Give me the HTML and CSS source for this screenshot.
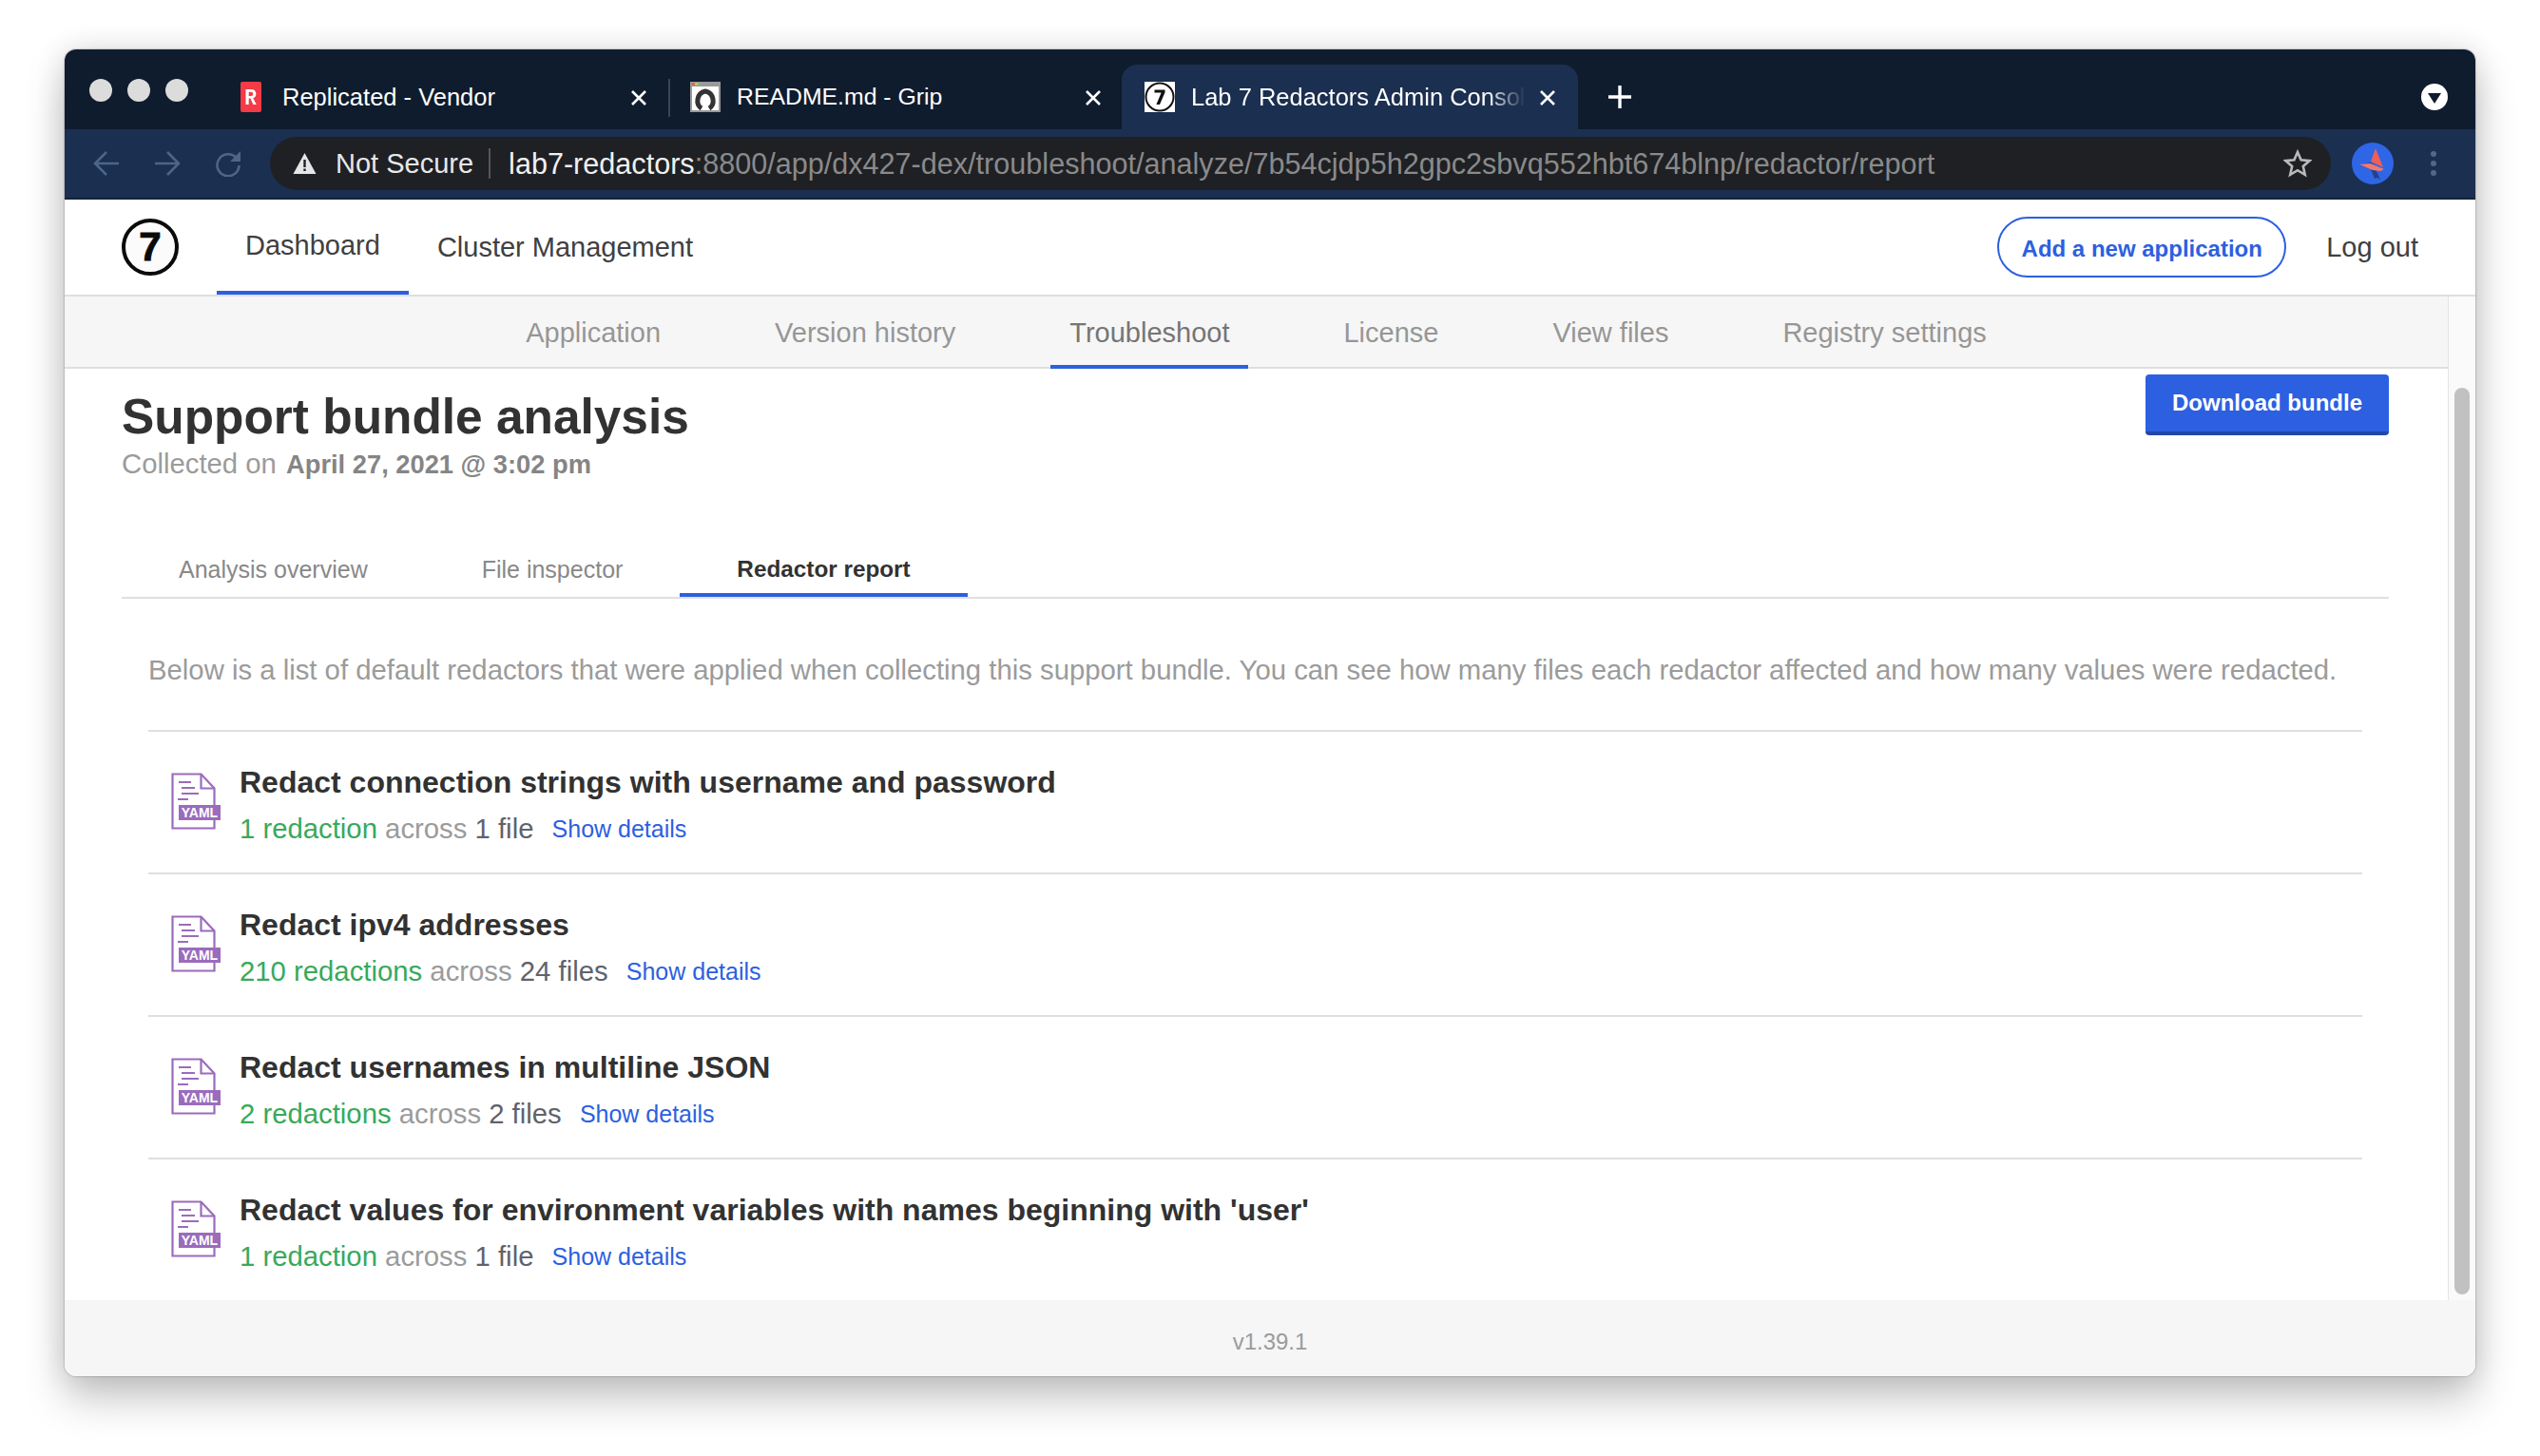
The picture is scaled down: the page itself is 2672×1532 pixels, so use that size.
FILE: index.html
```html
<!DOCTYPE html>
<html>
<head>
  <meta charset="utf-8">
  <title>Lab 7 Redactors Admin Console</title>
  <link rel="stylesheet" href="styles.css">
</head>
<body>
<div class="window">

  <div class="tabstrip">
    <div class="lights"><i></i><i></i><i></i></div>
    <div class="tab">
      <svg class="favicon" viewBox="0 0 22 32"><rect width="22" height="32" rx="2" fill="#f43b47"/><path d="M5.500 24V8h6a4.800 4.800 0 0 1 1.700 9.300L16.800 24h-3.400l-3-6.400H8.700V24zM8.700 10.800v4.200h2.500a2.100 2.100 0 0 0 0-4.200z" fill="#fff"/></svg>
      <span class="tab-title">Replicated - Vendor</span>
      <svg class="tab-x" viewBox="0 0 18 16"><path d="M2 1l14 14M16 1 2 15" stroke="#fff" stroke-width="2.600" fill="none"/></svg>
    </div>
    <div class="tab tab-second">
      <svg class="favicon favicon-wide" viewBox="0 0 32 32"><rect width="32" height="32" fill="#9a9a9a"/><rect x="2" y="5" width="28" height="25" fill="#fff"/><rect x="2" y="1.500" width="3" height="2" fill="#e2574c"/><rect x="5" y="1.500" width="3" height="2" fill="#e6c84a"/><rect x="8" y="1.500" width="3" height="2" fill="#7fbf6a"/><path d="M12 28C5.500 24 6.500 12 16 10c9.500 2 10.500 14 4 18" fill="none" stroke="#333" stroke-width="5"/></svg>
      <span class="tab-title">README.md - Grip</span>
      <svg class="tab-x" viewBox="0 0 18 16"><path d="M2 1l14 14M16 1 2 15" stroke="#fff" stroke-width="2.600" fill="none"/></svg>
    </div>
    <div class="tab tab-active">
      <svg class="favicon favicon-wide" viewBox="0 0 32 32"><rect width="32" height="32" fill="#fff"/><circle cx="16" cy="16" r="14.500" fill="#fff" stroke="#111" stroke-width="2"/><path d="M10.500 8.500h11v2.800L16 24h-3.600l5.200-12.400h-7.100z" fill="#111"/></svg>
      <span class="tab-title tab-title-fade">Lab 7 Redactors Admin Console</span>
      <svg class="tab-x" viewBox="0 0 18 16"><path d="M2 1l14 14M16 1 2 15" stroke="#fff" stroke-width="2.600" fill="none"/></svg>
    </div>
    <svg class="new-tab" viewBox="0 0 24 24"><path d="M12 0v24M0 12h24" stroke="#fff" stroke-width="3.400" fill="none"/></svg>
    <div class="tab-search"><span></span></div>
  </div>

  <div class="toolbar">
    <svg class="nav-icon" viewBox="0 0 28 28"><path d="M27 14H3M14 2 2 14l12 12" fill="none" stroke="#4d6589" stroke-width="2.600"/></svg>
    <svg class="nav-icon" viewBox="0 0 28 28"><path d="M1 14h24M14 2l12 12-12 12" fill="none" stroke="#4d6589" stroke-width="2.600"/></svg>
    <svg class="nav-icon" viewBox="0 0 28 28"><path d="M22.500 8A11.500 11.500 0 1 0 25.500 16" fill="none" stroke="#4d6589" stroke-width="2.600"/><path d="M27 1v11H16z" fill="#4d6589"/></svg>
    <div class="omnibox">
      <svg class="warn" viewBox="0 0 24 22"><path d="M12 0 24 22H0z" fill="#e6e6e6"/><path d="M10.800 7h2.400v8h-2.400zM10.800 16.500h2.400v2.500h-2.400z" fill="#1e2024"/></svg>
      <span class="not-secure">Not Secure</span>
      <span class="omni-url"><b>lab7-redactors</b>:8800/app/dx427-dex/troubleshoot/analyze/7b54cjdp5h2gpc2sbvq552hbt674blnp/redactor/report</span>
      <svg class="star" viewBox="0 0 30 30"><path d="M15 3l3.600 8.300 9 .8-6.800 5.900 2 8.800-7.800-4.600-7.800 4.600 2-8.800-6.800-5.900 9-.8z" fill="none" stroke="#b9b9b9" stroke-width="2.600"/></svg>
    </div>
    <svg class="avatar" viewBox="0 0 44 44"><circle cx="22" cy="22" r="22" fill="#2f66e6"/><path d="M19 26l6 2 5 11-3-2-3 1z" fill="#24408c"/><path d="M8 24l11 3 6 2-5-9z" fill="#1f4aa8" opacity=".7"/><path d="M25 6l8 20-13-6z" fill="#ee5f55"/><path d="M8 23l11-1 15 6-4 2-8-1z" fill="#f7776b"/></svg>
    <div class="kebab"><i></i><i></i><i></i></div>
  </div>

  <div class="appnav">
    <div class="logo"><span>7</span></div>
    <a class="appnav-link appnav-active">Dashboard</a>
    <a class="appnav-link">Cluster Management</a>
    <div class="appnav-right">
      <a class="pill">Add a new application</a>
      <a class="logout">Log out</a>
    </div>
  </div>

  <div class="middle">
    <div class="content">
      <div class="subnav">
        <a class="subnav-item">Application</a>
        <a class="subnav-item">Version history</a>
        <a class="subnav-item subnav-active">Troubleshoot</a>
        <a class="subnav-item">License</a>
        <a class="subnav-item">View files</a>
        <a class="subnav-item">Registry settings</a>
      </div>
      <div class="main">
        <div class="head">
          <div>
            <h1>Support bundle analysis</h1>
            <p class="collected">Collected on <b>April 27, 2021 @ 3:02 pm</b></p>
          </div>
          <a class="download">Download bundle</a>
        </div>
        <div class="tabs">
          <a class="tabs-item">Analysis overview</a>
          <a class="tabs-item">File inspector</a>
          <a class="tabs-item tabs-active">Redactor report</a>
        </div>
        <div class="report">
          <p class="intro">Below is a list of default redactors that were applied when collecting this support bundle. You can see how many files each redactor affected and how many values were redacted.</p>

          <div class="row">
            <svg class="yaml" viewBox="0 0 52 60"><path d="M1.500 1.500h30l14 15v42h-44z" fill="#fff" stroke="#9b6bbd" stroke-width="2.200"/><path d="M31.500 1.500v15h14" fill="none" stroke="#9b6bbd" stroke-width="2.200"/><path d="M8 10h13M11 16h14M11 22h18M7 28h11" stroke="#9b6bbd" stroke-width="2.200"/><rect x="8" y="34" width="44" height="16" fill="#9b6bbd"/><text x="30" y="46.800" class="yaml-text">YAML</text></svg>
            <div>
              <div class="row-title">Redact connection strings with username and password</div>
              <div class="row-sub"><span class="green">1 redaction</span> across <span class="count">1 file</span> <a class="details">Show details</a></div>
            </div>
          </div>

          <div class="row">
            <svg class="yaml" viewBox="0 0 52 60"><path d="M1.500 1.500h30l14 15v42h-44z" fill="#fff" stroke="#9b6bbd" stroke-width="2.200"/><path d="M31.500 1.500v15h14" fill="none" stroke="#9b6bbd" stroke-width="2.200"/><path d="M8 10h13M11 16h14M11 22h18M7 28h11" stroke="#9b6bbd" stroke-width="2.200"/><rect x="8" y="34" width="44" height="16" fill="#9b6bbd"/><text x="30" y="46.800" class="yaml-text">YAML</text></svg>
            <div>
              <div class="row-title">Redact ipv4 addresses</div>
              <div class="row-sub"><span class="green">210 redactions</span> across <span class="count">24 files</span> <a class="details">Show details</a></div>
            </div>
          </div>

          <div class="row">
            <svg class="yaml" viewBox="0 0 52 60"><path d="M1.500 1.500h30l14 15v42h-44z" fill="#fff" stroke="#9b6bbd" stroke-width="2.200"/><path d="M31.500 1.500v15h14" fill="none" stroke="#9b6bbd" stroke-width="2.200"/><path d="M8 10h13M11 16h14M11 22h18M7 28h11" stroke="#9b6bbd" stroke-width="2.200"/><rect x="8" y="34" width="44" height="16" fill="#9b6bbd"/><text x="30" y="46.800" class="yaml-text">YAML</text></svg>
            <div>
              <div class="row-title">Redact usernames in multiline JSON</div>
              <div class="row-sub"><span class="green">2 redactions</span> across <span class="count">2 files</span> <a class="details">Show details</a></div>
            </div>
          </div>

          <div class="row">
            <svg class="yaml" viewBox="0 0 52 60"><path d="M1.500 1.500h30l14 15v42h-44z" fill="#fff" stroke="#9b6bbd" stroke-width="2.200"/><path d="M31.500 1.500v15h14" fill="none" stroke="#9b6bbd" stroke-width="2.200"/><path d="M8 10h13M11 16h14M11 22h18M7 28h11" stroke="#9b6bbd" stroke-width="2.200"/><rect x="8" y="34" width="44" height="16" fill="#9b6bbd"/><text x="30" y="46.800" class="yaml-text">YAML</text></svg>
            <div>
              <div class="row-title">Redact values for environment variables with names beginning with 'user'</div>
              <div class="row-sub"><span class="green">1 redaction</span> across <span class="count">1 file</span> <a class="details">Show details</a></div>
            </div>
          </div>
        </div>
      </div>
    </div>
    <div class="scrolltrack"><div class="scrollthumb"></div></div>
  </div>

  <div class="footer">v1.39.1</div>
</div>
</body>
</html>
```
FILE: styles.css
```css
html, body {
  margin: 0;
  background: #fff;
}

body {
  height: 1532px;
  overflow: hidden;
  padding: 52px 68px 0;
  box-sizing: border-box;
  font-family: "Liberation Sans", Arial, sans-serif;
  color: #323232;
}

.window {
  width: 2536px;
  height: 1396px;
  display: flex;
  flex-direction: column;
  background: #fff;
  border-radius: 12px;
  overflow: hidden;
  box-shadow: 0 0 2px rgba(0, 0, 0, .45), 0 24px 44px rgba(0, 0, 0, .22), 0 0 32px rgba(0, 0, 0, .12);
}

/* browser chrome */
.tabstrip {
  height: 84px;
  flex: none;
  display: flex;
  background: #0f1c2e;
  box-sizing: border-box;
  padding-top: 16px;
  color: #fff;
}

.lights {
  display: flex;
  gap: 16px;
  width: 158px;
  padding: 15px 0 0 26px;
  box-sizing: border-box;
  flex: none;
}

.lights i {
  width: 24px;
  height: 24px;
  border-radius: 50%;
  background: #dcdcdc;
}

.tab {
  width: 477px;
  height: 68px;
  flex: none;
  display: flex;
  align-items: flex-start;
  box-sizing: border-box;
  padding: 18px 22px 0 27px;
  font-size: 25.500px;
  line-height: 32px;
}

.tab-second {
  border-left: 2px solid #3a4658;
  height: 40px;
  margin-top: 15px;
  padding: 3px 21px 0 21px;
  font-size: 24.800px;
}

.tab-active {
  background: #1b2f50;
  border-radius: 16px 16px 0 0;
  padding: 18px 23px 0 24px;
  width: 480px;
}

.favicon {
  width: 22px;
  height: 32px;
  flex: none;
  margin-right: 22px;
}

.favicon-wide {
  width: 32px;
  margin-right: 17px;
}

.tab-title {
  flex: 1;
  white-space: nowrap;
  overflow: hidden;
}

.tab-title-fade {
  -webkit-mask-image: linear-gradient(to right, #000 310px, transparent 352px);
  mask-image: linear-gradient(to right, #000 310px, transparent 352px);
}

.tab-x {
  width: 18px;
  height: 16px;
  flex: none;
  margin-top: 9px;
}

.new-tab {
  width: 24px;
  height: 24px;
  flex: none;
  margin: 22px 0 0 32px;
}

.tab-search {
  margin: 20px 29px 0 auto;
  width: 28px;
  height: 28px;
  border-radius: 50%;
  background: #fff;
  display: flex;
  align-items: center;
  justify-content: center;
}

.tab-search span {
  width: 0;
  height: 0;
  border-left: 7px solid transparent;
  border-right: 7px solid transparent;
  border-top: 11px solid #0f1c2e;
  margin-top: 3px;
}

.toolbar {
  height: 74px;
  flex: none;
  display: flex;
  align-items: center;
  background: #1b2f50;
  border-bottom: 2px solid #14233b;
  box-sizing: border-box;
  padding-left: 30px;
}

.nav-icon {
  width: 28px;
  height: 28px;
  flex: none;
  margin-right: 36px;
}

.nav-icon:nth-child(3) {
  margin-right: 30px;
}

.omnibox {
  width: 2168px;
  height: 56px;
  flex: none;
  display: flex;
  align-items: center;
  background: #1e2024;
  border-radius: 28px;
  box-sizing: border-box;
  padding: 0 20px 0 24px;
  font-size: 30.600px;
  color: #8a8a8a;
}

.warn {
  width: 25px;
  height: 22px;
  flex: none;
  margin-right: 20px;
}

.not-secure {
  color: #e8e8e8;
  font-size: 29px;
  padding-right: 16px;
  border-right: 2px solid #55575a;
  line-height: 32px;
  margin-right: 19px;
}

.omni-url {
  flex: 1;
  white-space: nowrap;
}

.omni-url b {
  font-weight: normal;
  color: #f0f0f0;
}

.star {
  width: 30px;
  height: 30px;
  flex: none;
}

.avatar {
  width: 44px;
  height: 44px;
  flex: none;
  margin-left: 22px;
}

.kebab {
  margin-left: 39px;
  display: flex;
  flex-direction: column;
  gap: 4px;
}

.kebab i {
  width: 6px;
  height: 6px;
  border-radius: 50%;
  background: #51688c;
}

/* app header */
.appnav {
  height: 102px;
  flex: none;
  display: flex;
  align-items: stretch;
  background: #fff;
  border-bottom: 2px solid #dfdfdf;
  box-sizing: border-box;
  padding: 0 60px;
}

.logo {
  width: 60px;
  height: 60px;
  flex: none;
  align-self: center;
  border: 4px solid #0a0a0a;
  border-radius: 50%;
  box-sizing: border-box;
  display: flex;
  align-items: center;
  justify-content: center;
  font-size: 42px;
  font-weight: bold;
  color: #0a0a0a;
  -webkit-text-stroke: 1px #0a0a0a;
  margin-right: 40px;
  background: #fbfbfb;
}

.appnav-link {
  font-size: 29px;
  color: #404040;
  padding: 0 30px;
  line-height: 100px;
  border-bottom: 4px solid transparent;
  height: 96px;
}

.appnav-active {
  border-bottom-color: #2c60e0;
  line-height: 96px;
}

.appnav-right {
  margin-left: auto;
  display: flex;
  align-items: center;
}

.pill {
  width: 304px;
  height: 64px;
  box-sizing: border-box;
  border: 2px solid #2c60e0;
  border-radius: 32px;
  text-align: center;
  line-height: 64px;
  font-size: 24px;
  font-weight: bold;
  color: #2c60e0;
}

.logout {
  font-size: 29px;
  color: #404040;
  margin-left: 42px;
}

/* middle part scrolls in the real page */
.middle {
  flex: 1;
  min-height: 0;
  display: flex;
}

.content {
  flex: 1;
  min-width: 0;
  border-right: 1px solid #e4e4e4;
  background: #fff;
  overflow: hidden;
}

.scrolltrack {
  width: 28px;
  flex: none;
  background: #fafafa;
  position: relative;
}

.scrollthumb {
  position: absolute;
  left: 6px;
  top: 96px;
  width: 16px;
  height: 954px;
  border-radius: 8px;
  background: #c1c1c1;
}

.subnav {
  height: 74px;
  display: flex;
  justify-content: center;
  background: #f6f6f6;
  border-bottom: 2px solid #dfdfdf;
}

.subnav-item {
  font-size: 29px;
  color: #969696;
  padding: 0 20px;
  margin: 0 40px;
  line-height: 76px;
  height: 74px;
}

.subnav-active {
  color: #757575;
  border-bottom: 4px solid #2c60e0;
  height: 72px;
}

.main {
  padding: 0 62px 0 60px;
}

.head {
  display: flex;
  justify-content: space-between;
  align-items: flex-start;
}

h1 {
  margin: 0;
  font-size: 51.400px;
  line-height: 60px;
  padding-top: 20px;
  font-weight: bold;
  color: #323232;
}

.collected {
  margin: 4px 0 0;
  font-size: 29.300px;
  line-height: 32px;
  color: #9b9b9b;
}

.collected b {
  color: #858585;
  font-size: 27.300px;
  margin-left: 2px;
}

.download {
  margin-top: 6px;
  width: 256px;
  height: 64px;
  box-sizing: border-box;
  background: #2c60e0;
  border-bottom: 4px solid #2247a8;
  border-radius: 4px;
  color: #fff;
  font-size: 24px;
  font-weight: bold;
  text-align: center;
  line-height: 60px;
}

.tabs {
  display: flex;
  margin-top: 67px;
  border-bottom: 2px solid #dfdfdf;
  height: 56px;
}

.tabs-item {
  font-size: 25px;
  color: #888;
  padding: 0 60px;
  line-height: 54px;
  height: 56px;
  box-sizing: border-box;
}

.tabs-active {
  color: #323232;
  font-weight: bold;
  font-size: 24.300px;
  border-bottom: 4px solid #2c60e0;
}

.report {
  padding: 0 28px;
}

.intro {
  margin: 0;
  padding: 55px 0 43px;
  font-size: 29.300px;
  line-height: 40px;
  color: #9b9b9b;
  white-space: nowrap;
}

.row {
  height: 150px;
  box-sizing: border-box;
  border-top: 2px solid #dfdfdf;
  display: flex;
  padding: 33px 0 0 24px;
}

.yaml {
  width: 52px;
  height: 60px;
  flex: none;
  margin: 10px 20px 0 0;
}

.yaml-text {
  font-size: 14px;
  font-weight: bold;
  fill: #fff;
  text-anchor: middle;
}

.row-title {
  font-size: 32px;
  line-height: 40px;
  font-weight: bold;
  color: #323232;
}

.row-sub {
  margin-top: 11px;
  font-size: 29.300px;
  line-height: 36px;
  color: #9b9b9b;
}

.green {
  color: #38a95a;
}

.count {
  color: #5f636a;
}

.details {
  margin-left: 11px;
  font-size: 25px;
  color: #2c60e0;
  vertical-align: 1px;
}

.footer {
  height: 80px;
  flex: none;
  background: #f6f6f6;
  color: #9b9b9b;
  font-size: 24px;
  line-height: 88px;
  text-align: center;
}
```
